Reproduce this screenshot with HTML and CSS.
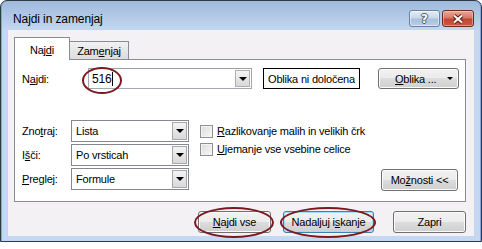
FILE: index.html
```html
<!DOCTYPE html>
<html>
<head>
<meta charset="utf-8">
<link rel="stylesheet" href="styles.css">
</head>
<body>
<div class="window">
  <div class="titlebar">
    <span class="title">Najdi in zamenjaj</span>
    <div class="caption-btns">
      <div class="cbtn help"><span class="qmark">?</span></div>
      <div class="cbtn close">
        <svg width="14" height="10" viewBox="0 0 14 10"><path d="M3 1.5 L11 8.5 M11 1.5 L3 8.5" stroke="#5a1a12" stroke-width="4" fill="none"/><path d="M3 1.5 L11 8.5 M11 1.5 L3 8.5" stroke="#ffffff" stroke-width="2" fill="none"/></svg>
      </div>
    </div>
  </div>
  <div class="client">
    <div class="tabs">
      <div class="tab active">Naj<u>d</u>i</div>
      <div class="tab">Zam<u>e</u>njaj</div>
    </div>
    <div class="panel">
      <div class="row1">
        <span class="lbl1">N<u>a</u>jdi:</span>
        <div class="combo">
          <span class="val">516<span class="caret"></span></span>
          <span class="ddbtn"><i class="arrow"></i></span>
          <span class="ring ring-516"></span>
        </div>
        <div class="fmt-box">Oblika ni določena</div>
        <div class="btn fmt-btn"><span><u>O</u>blika ...</span><i class="arrow small"></i></div>
      </div>
      <div class="row2">
        <div class="fields">
          <div class="field"><span class="lbl2">Zno<u>t</u>raj:</span><div class="select"><span>Lista</span><span class="ddbtn"><i class="arrow"></i></span></div></div>
          <div class="field"><span class="lbl2">I<u>š</u>či:</span><div class="select"><span>Po vrsticah</span><span class="ddbtn"><i class="arrow"></i></span></div></div>
          <div class="field"><span class="lbl2"><u>P</u>reglej:</span><div class="select"><span>Formule</span><span class="ddbtn"><i class="arrow"></i></span></div></div>
        </div>
        <div class="checks">
          <div class="check"><span class="box"></span><span><u>R</u>azlikovanje malih in velikih črk</span></div>
          <div class="check"><span class="box"></span><span><u>U</u>jemanje vse vsebine celice</span></div>
        </div>
        <div class="opts">
          <div class="btn opt-btn">Mo<u>ž</u>nosti &lt;&lt;</div>
        </div>
      </div>
    </div>
    <div class="actions">
      <div class="btn act find-all"><span><u>N</u>ajdi vse</span><span class="ring ring-all"></span></div>
      <div class="btn act find-next default"><span>Nadaljuj i<u>s</u>kanje</span><span class="ring ring-next"></span></div>
      <div class="btn act close-btn">Zapri</div>
    </div>
  </div>
</div>
</body>
</html>
```

FILE: styles.css
```css
html, body {
  margin: 0;
  padding: 0;
  background: #ffffff;
}
body {
  font-family: "Liberation Sans", Arial, sans-serif;
  font-size: 11px;
  letter-spacing: -0.2px;
  color: #000;
}
u { text-decoration: underline; text-underline-offset: 1px; }

.window {
  width: 482px;
  height: 242px;
  box-sizing: border-box;
  border: 1px solid #2f3946;
  border-radius: 7px 7px 0 0;
  background: linear-gradient(#9fbadc 0px, #c4d8f0 30px, #c4d9f1 100%);
  display: flex;
  flex-direction: column;
  box-shadow: inset 1px 0 0 #7fa6d8, inset -1px 0 0 #7fa6d8;
}

.titlebar {
  height: 29px;
  flex: none;
  display: flex;
  justify-content: space-between;
  align-items: flex-start;
  padding: 0 7px 0 12px;
}
.title {
  margin-top: 8px;
  line-height: 20px;
  font-size: 12px;
  letter-spacing: -0.1px;
  color: #000;
}
.caption-btns {
  display: flex;
  gap: 2px;
  margin-top: 9px;
}
.cbtn {
  height: 17px;
  box-sizing: border-box;
  border-radius: 3px;
  display: flex;
  align-items: center;
  justify-content: center;
}
.help {
  width: 31px;
  border: 1px solid #6f819a;
  background: linear-gradient(#e2ebf6 0%, #c9d9ec 45%, #a9c0dd 55%, #b9cde6 100%);
  box-shadow: inset 0 0 0 1px rgba(255,255,255,0.5);
}
.qmark {
  font-family: "DejaVu Sans", sans-serif;
  font-weight: bold;
  font-size: 12px;
  line-height: 14px;
  color: #ffffff;
  text-shadow: 1px 0 0 #4a5566, -1px 0 0 #4a5566, 0 1px 0 #4a5566, 0 -1px 0 #4a5566;
}
.close {
  width: 32px;
  border: 1px solid #6e2a22;
  background: linear-gradient(#e8a999 0%, #d77a66 45%, #c4462f 55%, #c95a43 100%);
  box-shadow: inset 0 0 0 1px rgba(255,220,210,0.45);
}

.client {
  flex: 1;
  margin: 0 7px 5px 7px;
  background: #f4f1f5;
  display: flex;
  flex-direction: column;
}

.tabs {
  display: flex;
  align-items: flex-end;
  height: 22px;
  margin-top: 7px;
  padding-left: 6px;
}
.tab {
  box-sizing: border-box;
  display: flex;
  align-items: center;
  justify-content: center;
  border: 1px solid #898c95;
  border-bottom: none;
}
.tab.active {
  width: 56px;
  height: 23px;
  margin-bottom: -1px;
  background: #ffffff;
  position: relative;
  z-index: 1;
  padding-top: 1px;
}
.tab:not(.active) {
  width: 59px;
  height: 18px;
  border-left: none;
  background: linear-gradient(#f2f2f2, #dcdcdc);
  padding-top: 1px;
}

.panel {
  margin-left: 6px;
  width: 452px;
  height: 143px;
  box-sizing: border-box;
  border: 1px solid #898c95;
  background: #ffffff;
  padding: 8px 0 0 7px;
}

.row1 {
  display: flex;
  align-items: center;
  height: 21px;
}
.lbl1 { width: 66px; }

.combo {
  position: relative;
  width: 164px;
  height: 21px;
  box-sizing: border-box;
  border: 1px solid #a3a7ae;
  border-top-color: #9a9ea6;
  display: flex;
  align-items: center;
  justify-content: space-between;
  padding-left: 3px;
}
.val { display: flex; align-items: center; font-size: 12px; }
.caret {
  display: inline-block;
  width: 1px;
  height: 14px;
  background: #000;
  margin-left: 1px;
}
.ddbtn {
  width: 15px;
  height: 17px;
  margin-right: 1px;
  box-sizing: border-box;
  border: 1px solid #b0b0b0;
  background: linear-gradient(#f4f4f4, #d8d8d8);
  display: flex;
  align-items: center;
  justify-content: center;
}
.arrow {
  display: block;
  width: 0;
  height: 0;
  border-left: 4px solid transparent;
  border-right: 4px solid transparent;
  border-top: 4px solid #000;
}
.arrow.small {
  border-left-width: 3px;
  border-right-width: 3px;
  border-top-width: 3px;
}

.fmt-box {
  margin-left: 11px;
  width: 97px;
  height: 21px;
  box-sizing: border-box;
  border: 1px solid #000;
  display: flex;
  align-items: center;
  justify-content: center;
}

.btn {
  box-sizing: border-box;
  border: 1px solid #707070;
  border-radius: 3px;
  background: linear-gradient(#f2f2f2 0%, #ebebeb 50%, #dddddd 50%, #cfcfcf 100%);
  box-shadow: inset 0 0 0 1px #fbfbfb;
  display: flex;
  align-items: center;
  justify-content: center;
}
.fmt-btn {
  margin-left: 18px;
  width: 81px;
  height: 21px;
  justify-content: space-between;
  padding: 0 5px 0 16px;
}

.row2 {
  display: flex;
  margin-top: 31px;
}
.fields {
  display: flex;
  flex-direction: column;
  gap: 2px;
}
.field {
  display: flex;
  align-items: center;
}
.lbl2 { width: 49px; }
.select {
  width: 118px;
  height: 22px;
  box-sizing: border-box;
  border: 1px solid #848890;
  display: flex;
  align-items: center;
  justify-content: space-between;
  padding-left: 4px;
}
.select .ddbtn { height: 18px; border-color: #a8a8a8; }

.checks {
  margin-left: 11px;
  padding-top: 2px;
  display: flex;
  flex-direction: column;
}
.check {
  display: flex;
  align-items: center;
  height: 18px;
}
.box {
  width: 13px;
  height: 13px;
  box-sizing: border-box;
  border: 1px solid #8e8f8f;
  background: linear-gradient(135deg, #dcdcdc, #f7f7f7);
  box-shadow: inset 0 0 0 1px #f4f4f4;
  margin-right: 4px;
}

.opts {
  flex: 1;
  display: flex;
  justify-content: flex-end;
  align-items: flex-end;
  padding-right: 7px;
}
.opt-btn {
  width: 77px;
  height: 22px;
  margin-bottom: -1px;
}

.actions {
  display: flex;
  justify-content: flex-end;
  margin-top: 9px;
  padding-right: 8px;
}
.act {
  position: relative;
  height: 22px;
}
.find-all { width: 73px; margin-right: 12px; }
.find-next { width: 91px; margin-right: 19px; }
.close-btn { width: 73px; }
.default {
  border-color: #3c7fb1;
  box-shadow: inset 0 0 0 1px #9fe0f8;
}

.ring {
  position: absolute;
  box-sizing: border-box;
  border: 2px solid #7e1820;
  border-radius: 50%;
  pointer-events: none;
}
.ring-516 { left: -7px; top: -2px; width: 40px; height: 27px; }
.ring-all { left: -5px; top: -5px; width: 80px; height: 31px; }
.ring-next { left: -4px; top: -5px; width: 96px; height: 31px; }
```
